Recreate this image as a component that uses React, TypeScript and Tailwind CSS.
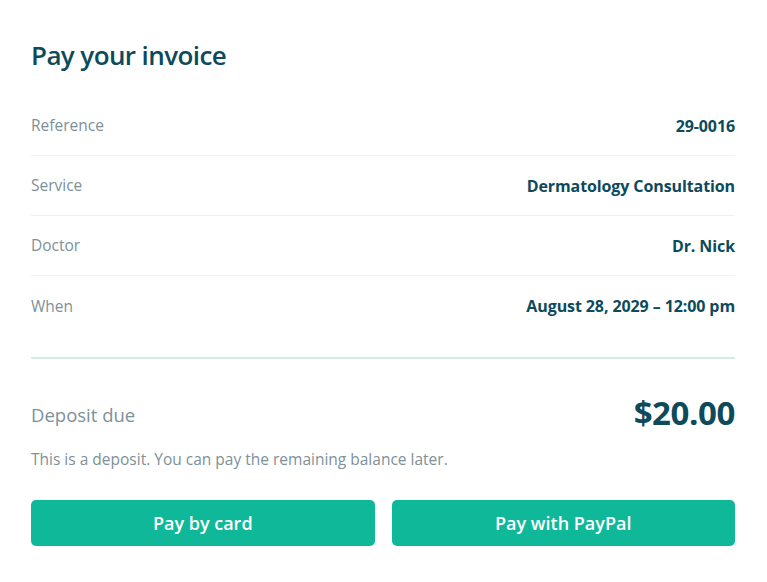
const rows = [
  { label: "Reference", value: "29-0016" },
  { label: "Service", value: "Dermatology Consultation" },
  { label: "Doctor", value: "Dr. Nick" },
  { label: "When", value: "August 28, 2029 – 12:00 pm" },
];

export default function App() {
  return (
    <div
      className="w-[767px] h-[582px] bg-white pl-[31px] pr-[32px] pt-[36px]"
      style={{ fontFamily: '"Open Sans", "Noto Sans", sans-serif' }}
    >
      <h1 className="text-[26px] leading-[38px] font-semibold text-[#0c4a5c] tracking-[-0.6px]">
        Pay your invoice
      </h1>

      <div className="mt-[22px]">
        {rows.map((row, i) => (
          <div
            key={row.label}
            className={
              "h-[60px] flex items-center justify-between " +
              (i < rows.length - 1 ? "border-b border-[#eef1f2]" : "")
            }
          >
            <span className="text-[15.5px] text-[#7d9197] pt-[1px]">{row.label}</span>
            <span className="text-[16px] font-bold text-[#0c4a5c] tracking-[-0.1px]">
              {row.value}
            </span>
          </div>
        ))}
      </div>

      <div className="mt-[21px] h-[2px] bg-[#d5ebe7]" />

      <div className="mt-[34px] flex items-center justify-between h-[40px]">
        <span className="text-[18.5px] text-[#7d9197] pt-[4px]">Deposit due</span>
        <span className="text-[33px] leading-[40px] font-bold text-[#0c4a5c] tracking-[-0.4px]">
          $20.00
        </span>
      </div>

      <p className="mt-[14px] text-[15.5px] leading-[24px] text-[#7d9197]">
        This is a deposit. You can pay the remaining balance later.
      </p>

      <div className="mt-[29px] grid grid-cols-2 gap-[17px]">
        <button className="h-[46px] rounded-[5px] bg-[#10b89a] text-white text-[18px] font-semibold">
          Pay by card
        </button>
        <button className="h-[46px] rounded-[5px] bg-[#10b89a] text-white text-[18px] font-semibold">
          Pay with PayPal
        </button>
      </div>
    </div>
  );
}
